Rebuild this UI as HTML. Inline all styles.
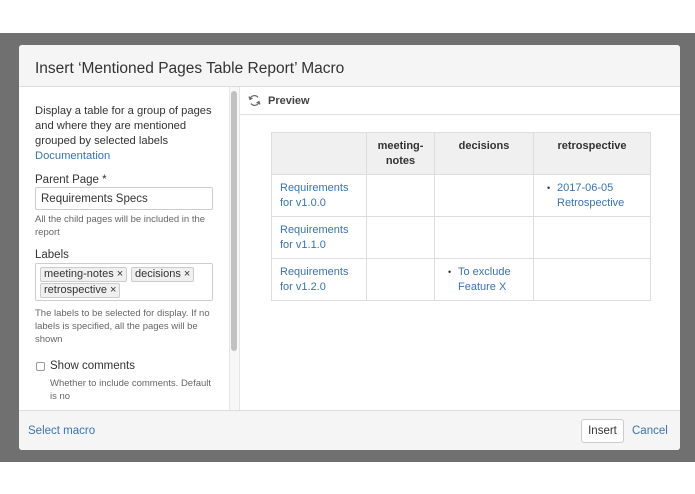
<!DOCTYPE html>
<html><head><style>
*{margin:0;padding:0;box-sizing:border-box}
body{width:695px;height:494px;background:#fff;font-family:"Liberation Sans",sans-serif;position:relative;overflow:hidden;color:#333}
.a{position:absolute}
.bg{left:0;top:33px;width:695px;height:429px;background:#707070}
.dlg{left:19px;top:45px;width:661px;height:405px;background:#fff;border-radius:3px;overflow:hidden}
.hd{left:0;top:0;width:661px;height:42px;background:#f5f5f5;border-bottom:1px solid #ddd;font-size:15.5px;padding:15px 0 0 16px;color:#333}
.ft{left:0;top:365px;width:661px;height:40px;background:#f5f5f5;border-top:1px solid #ddd}
.lnk{color:#3b73af}
.t{font-size:11.5px;line-height:15px}
.s{font-size:9.5px;line-height:13px;color:#666}
.inp{border:1px solid #ccc;border-radius:2px;background:#fff}
.tag{position:absolute;height:15px;border:1px solid #ccc;background:#f0f0f0;border-radius:2px;font-size:11px;line-height:13px;padding:0 3px;color:#333;white-space:nowrap}
table{border-collapse:collapse;font-size:11px;table-layout:fixed}
td,th{border:1px solid #ddd;vertical-align:top;padding:6px 8px 0;line-height:15px;height:42px}
th{background:#f0f0f0;font-weight:bold;text-align:center}
td{color:#3b73af}
.b{position:relative;padding-left:23px}
.b:before{content:"•";position:absolute;left:13px;top:6px;color:#333;font-size:9px}
</style></head><body>
<div class="a bg"></div>
<div class="a dlg">
 <div class="a hd">Insert ‘Mentioned Pages Table Report’ Macro</div>
 <div class="a t" style="left:16px;top:59px;width:190px;white-space:nowrap;font-size:11.2px">Display a table for a group of pages<br>and where they are mentioned<br>grouped by selected labels<br><span class="lnk">Documentation</span></div>
 <div class="a t" style="left:16px;top:128px">Parent Page *</div>
 <div class="a inp t" style="left:16px;top:142px;width:178px;height:23px;padding:4px 5px">Requirements Specs</div>
 <div class="a s" style="left:16px;top:168px;width:175px">All the child pages will be included in the report</div>
 <div class="a t" style="left:16px;top:203px">Labels</div>
 <div class="a inp" style="left:16px;top:218px;width:178px;height:38px">
  <span class="tag" style="left:4px;top:3px">meeting-notes ×</span>
  <span class="tag" style="left:95px;top:3px">decisions ×</span>
  <span class="tag" style="left:4px;top:19px">retrospective ×</span>
 </div>
 <div class="a s" style="left:16px;top:262px;width:190px;white-space:nowrap">The labels to be selected for display. If no<br>labels is specified, all the pages will be<br>shown</div>
 <div class="a" style="left:17px;top:317px;width:9px;height:9px;border:1px solid #999;border-radius:2px"></div>
 <div class="a t" style="left:31px;top:314px">Show comments</div>
 <div class="a s" style="left:31px;top:332px;white-space:nowrap">Whether to include comments. Default<br>is no</div>
 <div class="a" style="left:210px;top:42px;width:11px;height:323px;background:#f7f7f7;border-left:1px solid #e5e5e5;border-right:1px solid #e5e5e5"></div>
 <div class="a" style="left:212px;top:46px;width:6px;height:260px;background:#c1c1c1;border-radius:3px"></div>
 <div class="a" style="left:221px;top:42px;width:440px;height:28px;border-bottom:1px solid #e0e0e0"></div>
 <svg class="a" style="left:229px;top:49px" width="13" height="13" viewBox="0 0 13 13"><path d="M2 5A4.5 4.5 0 0 1 10 3.5M11 8A4.5 4.5 0 0 1 3 9.5" fill="none" stroke="#666" stroke-width="1.2"/><path d="M1 2.5L2 5.5L4.5 4" fill="none" stroke="#666" stroke-width="1.2"/><path d="M12 10.5L11 7.5L8.5 9" fill="none" stroke="#666" stroke-width="1.2"/></svg>
 <div class="a" style="left:249px;top:50px;font-size:11px;font-weight:bold;color:#444">Preview</div>
 <table class="a" style="left:252px;top:87px;width:379px">
  <colgroup><col style="width:95px"><col style="width:68px"><col style="width:99px"><col style="width:117px"></colgroup>
  <tr><th></th><th>meeting-<br>notes</th><th>decisions</th><th>retrospective</th></tr>
  <tr><td>Requirements<br>for v1.0.0</td><td></td><td></td><td class="b">2017-06-05<br>Retrospective</td></tr>
  <tr><td>Requirements<br>for v1.1.0</td><td></td><td></td><td></td></tr>
  <tr><td>Requirements<br>for v1.2.0</td><td></td><td class="b">To exclude<br>Feature X</td><td></td></tr>
 </table>
 <div class="a ft">
  <div class="a lnk" style="left:9px;top:14px;font-size:11.5px">Select macro</div>
  <div class="a" style="left:562px;top:8px;width:43px;height:24px;border:1px solid #ccc;border-radius:3px;background:#fff;font-size:11.5px;text-align:center;line-height:22px">Insert</div>
  <div class="a lnk" style="left:613px;top:14px;font-size:11.5px">Cancel</div>
 </div>
</div>
</body></html>
